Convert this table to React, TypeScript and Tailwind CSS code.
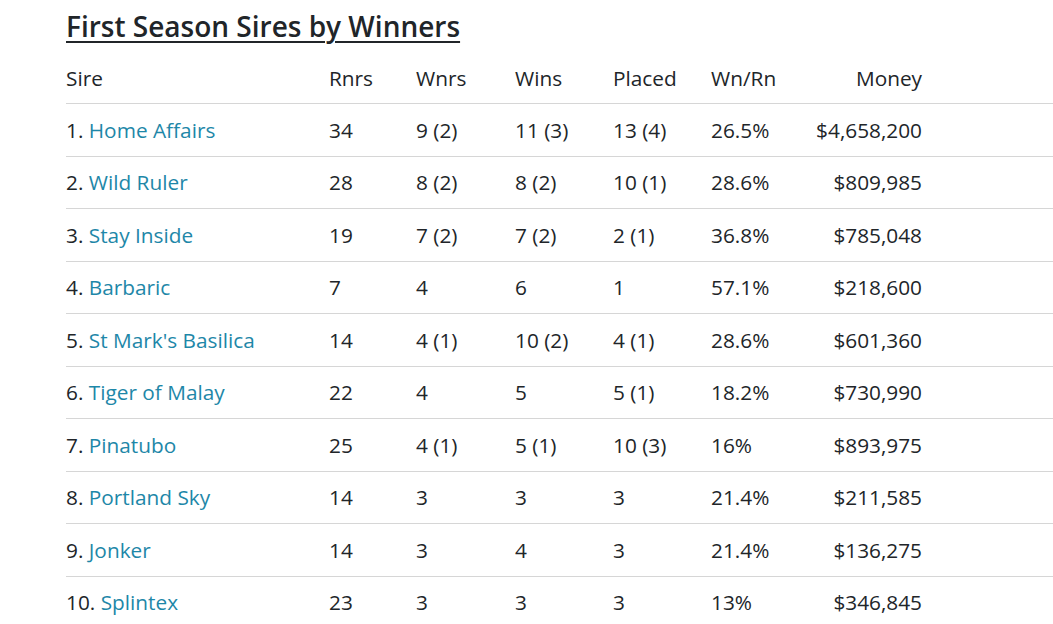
import React from "react";

// one row of the first season sires table
interface SireRow {
  rank: number;
  name: string;
  rnrs: string;
  wnrs: string;
  wins: string;
  placed: string;
  ratio: string;
  money: string;
}

const rows: SireRow[] = [
  { rank: 1, name: "Home Affairs", rnrs: "34", wnrs: "9 (2)", wins: "11 (3)", placed: "13 (4)", ratio: "26.5%", money: "$4,658,200" },
  { rank: 2, name: "Wild Ruler", rnrs: "28", wnrs: "8 (2)", wins: "8 (2)", placed: "10 (1)", ratio: "28.6%", money: "$809,985" },
  { rank: 3, name: "Stay Inside", rnrs: "19", wnrs: "7 (2)", wins: "7 (2)", placed: "2 (1)", ratio: "36.8%", money: "$785,048" },
  { rank: 4, name: "Barbaric", rnrs: "7", wnrs: "4", wins: "6", placed: "1", ratio: "57.1%", money: "$218,600" },
  { rank: 5, name: "St Mark's Basilica", rnrs: "14", wnrs: "4 (1)", wins: "10 (2)", placed: "4 (1)", ratio: "28.6%", money: "$601,360" },
  { rank: 6, name: "Tiger of Malay", rnrs: "22", wnrs: "4", wins: "5", placed: "5 (1)", ratio: "18.2%", money: "$730,990" },
  { rank: 7, name: "Pinatubo", rnrs: "25", wnrs: "4 (1)", wins: "5 (1)", placed: "10 (3)", ratio: "16%", money: "$893,975" },
  { rank: 8, name: "Portland Sky", rnrs: "14", wnrs: "3", wins: "3", placed: "3", ratio: "21.4%", money: "$211,585" },
  { rank: 9, name: "Jonker", rnrs: "14", wnrs: "3", wins: "4", placed: "3", ratio: "21.4%", money: "$136,275" },
  { rank: 10, name: "Splintex", rnrs: "23", wnrs: "3", wins: "3", placed: "3", ratio: "13%", money: "$346,845" },
];

const gridCols =
  "grid grid-cols-[263px_87px_99px_98px_98px_100px_111px_1fr] items-center";

const App: React.FC = () => {
  return (
    <div
      className="min-h-screen bg-white pl-[66px] text-[#212529] overflow-hidden"
      style={{ fontFamily: '"Open Sans", "Liberation Sans", sans-serif' }}
    >
      <h1 className="pt-[7px] mb-[7px] text-[28px] leading-[38px] font-semibold underline decoration-2 underline-offset-[4px]">
        First Season Sires by Winners
      </h1>

      <div className="w-[1100px] text-[20.8px] leading-[30px]">
        {/* header */}
        <div className={`${gridCols} h-[52px] border-b border-[#d6d6d6]`}>
          <div>Sire</div>
          <div>Rnrs</div>
          <div>Wnrs</div>
          <div>Wins</div>
          <div>Placed</div>
          <div>Wn/Rn</div>
          <div className="text-right">Money</div>
          <div />
        </div>

        {rows.map((row) => (
          <div
            key={row.rank}
            className={`${gridCols} h-[52.5px] border-b border-[#d6d6d6]`}
          >
            <div>
              {row.rank}.{" "}
              <a href="#" className="text-[#1e87a8]">
                {row.name}
              </a>
            </div>
            <div>{row.rnrs}</div>
            <div>{row.wnrs}</div>
            <div>{row.wins}</div>
            <div>{row.placed}</div>
            <div>{row.ratio}</div>
            <div className="text-right">{row.money}</div>
            <div />
          </div>
        ))}
      </div>
    </div>
  );
};

export default App;
